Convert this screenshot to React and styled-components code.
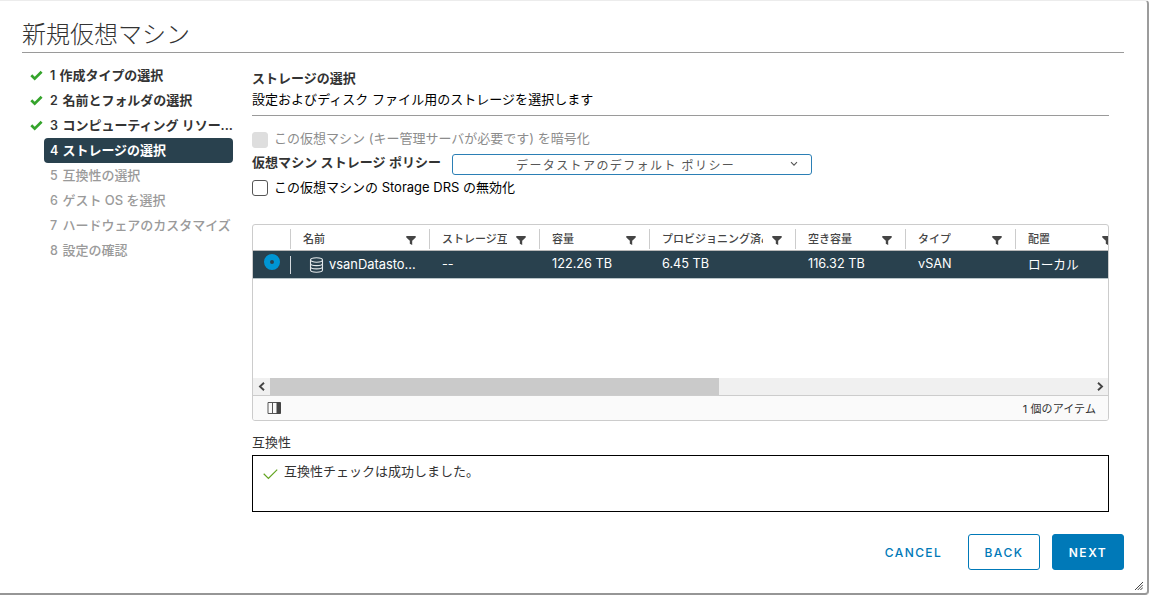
import React from 'react';
import styled, { createGlobalStyle } from 'styled-components';

const GlobalStyle = createGlobalStyle`
    * {
        box-sizing: border-box;
    }

    body {
        margin: 0;
        background: #fff;
        color: #333;
        font-family: Inter, "Noto Sans CJK JP", sans-serif;
        font-size: 13px;
        overflow: hidden;
    }
`

const Dialog = styled.div`
    position: relative;
    display: flex;
    flex-direction: column;
    width: 1149px;
    height: 595px;
    padding: 0 23px 0 22px;
    background: #fff;
    border-top: 1px solid #ececec;
    border-right: 2px solid #9c9c9c;
    border-bottom: 2px solid #969696;
    border-radius: 0 4px 4px 0;
`

const Title = styled.h1`
    height: 52px;
    margin: 0;
    padding-top: 17px;
    border-bottom: 1px solid #9a9a9a;
    color: #333;
    font-size: 24px;
    line-height: 34px;
    font-weight: 200;
`

const Body = styled.div`
    display: flex;
    height: 460px;
`

const Steps = styled.ol`
    flex: none;
    width: 230px;
    margin: 0;
    padding: 10px 0 0;
    list-style: none;
`

const Step = styled.li`
    display: flex;
    align-items: center;
    width: 211px;
    height: 25px;
    color: ${props => props.$state === 'todo' ? '#9a9a9a' : '#333'};
    font-weight: ${props => props.$state === 'todo' ? 500 : 600};
    white-space: nowrap;
`

const StepMark = styled.span`
    flex: none;
    display: flex;
    width: 22px;
    padding-left: 8px;
`

const StepLabel = styled.span`
    flex: none;
    width: 189px;
    height: 25px;
    padding-left: 6px;
    border-radius: 4px;
    line-height: 25px;
    letter-spacing: -.03px;
    color: ${props => props.$active ? '#fff' : 'inherit'};
    background: ${props => props.$active ? '#29414e' : 'transparent'};
`

const StepNumber = styled.span`
    display: inline-block;
    width: ${props => props.$narrow ? 9.5 : 12.5}px;
    font-size: 12.5px;
`

const Content = styled.main`
    width: 857px;
    padding-top: 14px;
`

const PageHeader = styled.header`
    height: 49px;
    padding-top: 1px;
    border-bottom: 1px solid #9a9a9a;
`

const PageTitle = styled.h2`
    margin: 0;
    font-size: 13px;
    line-height: 21px;
    font-weight: 600;
`

const PageText = styled.p`
    margin: 0;
    color: #000;
    line-height: 21px;
    letter-spacing: .03px;
`

const Options = styled.div`
    height: 108px;
    padding-top: 12px;
`

const Field = styled.label`
    display: flex;
    align-items: center;
    height: 24px;
    color: ${props => props.$disabled ? '#8c8c8c' : '#000'};
    white-space: pre;
`

const FieldText = styled.span`
    height: 24px;
    line-height: ${props => props.$disabled ? 21 : 22}px;
`

const Checkbox = styled.span`
    width: 16px;
    height: 16px;
    margin-right: 6px;
    border: 1px solid ${props => props.$disabled ? '#dedede' : '#565656'};
    border-radius: 3px;
    background: ${props => props.$disabled ? '#dedede' : '#fff'};
`

const FieldName = styled.span`
    width: 200px;
    height: 24px;
    color: #333;
    font-weight: 600;
    line-height: 20px;
    letter-spacing: .05px;
`

const Select = styled.div`
    display: flex;
    align-items: center;
    width: 360px;
    height: 21px;
    padding: 0 13px 0 63px;
    border: 1px solid #2b7fb5;
    border-radius: 3px;
    color: #565656;
    font-size: 12px;
    letter-spacing: 1.4px;
    justify-content: space-between;
`

const Grid = styled.section`
    width: 857px;
    height: 197px;
    border: 1px solid #ccc;
    border-radius: 3px;
    overflow: hidden;
`

const columns = '38px 139px 110px 110px 146px 110px 110px 110px';

const GridHead = styled.div`
    display: grid;
    grid-template-columns: ${columns};
    height: 26px;
    padding-top: 4px;
    border-bottom: 1px solid #b8b8b8;
`

const HeadCell = styled.div`
    display: flex;
    align-items: center;
    justify-content: space-between;
    height: 20px;
    padding: 0 13px 3px 12px;
    border-right: 1px solid #ccc;
    color: #454545;
    font-size: 11px;
    font-weight: 500;
    white-space: nowrap;

    span {
        margin-right: 9px;
        overflow: hidden;
    }

    svg {
        flex: none;
        margin-top: 5px;
    }
`

const GridRow = styled.div`
    display: grid;
    grid-template-columns: ${columns};
    align-items: center;
    height: 28px;
    border-bottom: 1px solid #b8c4c8;
    background: #29414e;
    color: #fff;
    font-size: 12.7px;
`

const Cell = styled.div`
    display: flex;
    align-items: center;
    padding: 0 0 2px 12px;
    white-space: nowrap;
`

const RadioCell = styled.div`
    display: flex;
    align-items: center;
    height: 18px;
    padding-left: 11px;
    border-right: 1px solid #d5dade;
`

const Radio = styled.span`
    width: 16px;
    height: 16px;
    margin-top: -5px;
    border: 6px solid #0095d3;
    border-radius: 50%;
    background: #29414e;
`

const DatastoreName = styled(Cell)`
    gap: 5px;
    padding: 0 0 0 18px;
    font-size: 12.9px;
`

const Empty = styled.div`
    height: 99px;
`

const Scrollbar = styled.div`
    display: flex;
    align-items: center;
    justify-content: space-between;
    height: 18px;
    padding: 0 4px 0 5px;
    background: #f0f0f0;
    border-bottom: 1px solid #ccc;
`

const Thumb = styled.div`
    width: 449px;
    height: 17px;
    margin: 0 auto 0 5px;
    background: #cacaca;
`

const GridFooter = styled.div`
    display: flex;
    align-items: center;
    justify-content: space-between;
    height: 24px;
    padding: 0 12px 1px 14px;
    background: #fafafa;
    font-size: 11px;
    letter-spacing: .1px;
    white-space: pre;
`

const CompatibilityTitle = styled.div`
    height: 34px;
    padding-top: 11px;
    line-height: 21px;
`

const Compatibility = styled.div`
    display: flex;
    gap: 6px;
    height: 57px;
    padding: 5px 10px;
    border: 1px solid #000;
    line-height: 21px;

    svg {
        margin-top: 7px;
    }
`

const Actions = styled.footer`
    display: flex;
    justify-content: flex-end;
    gap: 12px;
    padding-top: 21px;
`

const Button = styled.button`
    width: ${props => props.$plain ? 85 : 72}px;
    height: 36px;
    padding: 0;
    border: 1px solid ${props => props.$plain ? 'transparent' : '#0079b8'};
    border-radius: 3px;
    background: ${props => props.$primary ? '#0079b8' : 'transparent'};
    color: ${props => props.$primary ? '#fff' : '#0079b8'};
    font-family: Inter, sans-serif;
    font-size: 12px;
    font-weight: ${props => props.$primary ? 600 : 500};
    letter-spacing: ${props => props.$plain ? 1.4 : 1.55}px;
`

const Grip = styled.svg`
    position: absolute;
    right: 4px;
    bottom: 3px;
`

const steps = [
    { name: '作成タイプの選択', state: 'done' },
    { name: '名前とフォルダの選択', state: 'done' },
    { name: 'コンピューティング リソー...', state: 'done' },
    { name: 'ストレージの選択', state: 'active' },
    { name: '互換性の選択', state: 'todo' },
    { name: 'ゲスト OS を選択', state: 'todo' },
    { name: 'ハードウェアのカスタマイズ', state: 'todo' },
    { name: '設定の確認', state: 'todo' }
];

const headings = ['名前', 'ストレージ互', '容量', 'プロビジョニング済み', '空き容量', 'タイプ', '配置'];
const values = ['--', '122.26 TB', '6.45 TB', '116.32 TB', 'vSAN', 'ローカル'];

const DoneIcon = () => (
    <svg width="13" height="11" viewBox="0 0 13 11">
        <path d="M1.3 5.2 4.7 8.6 11.6 1.7" fill="none" stroke="#35a42c" strokeWidth="2.7" />
    </svg>
);

const FilterIcon = () => (
    <svg width="10" height="9" viewBox="0 0 10 9">
        <path d="M0.3 0h9.4v1.4L6.2 4.8V9L3.8 7.8V4.8L0.3 1.4z" fill="#454545" />
    </svg>
);

const DatastoreIcon = () => (
    <svg width="15" height="16" viewBox="0 0 15 16" fill="none" stroke="#e4e9eb" strokeWidth="1.1">
        <ellipse cx="7.5" cy="3" rx="6" ry="2.2" />
        <path d="M1.5 3v10c0 1.2 2.7 2.2 6 2.2s6-1 6-2.2V3" />
        <path d="M1.5 6.4c0 1.2 2.7 2.2 6 2.2s6-1 6-2.2M1.5 9.7c0 1.2 2.7 2.2 6 2.2s6-1 6-2.2" />
    </svg>
);

const ColumnsIcon = () => (
    <svg width="14" height="12" viewBox="0 0 14 12">
        <path d="M1 .5h12v11H1zM5.5.5v11" fill="none" stroke="#565656" />
        <path d="M9.5 0H13a1 1 0 0 1 1 1v10a1 1 0 0 1-1 1H9.5z" fill="#454545" />
    </svg>
);

const Arrow = ({ d }) => (
    <svg width="7" height="9" viewBox="0 0 7 9">
        <path d={d} fill="none" stroke="#454545" strokeWidth="1.9" />
    </svg>
);

const App = () => (
    <>
        <GlobalStyle />
        <Dialog>
            <Title>新規仮想マシン</Title>
            <Body>
                <Steps>
                    {steps.map((step, i) => (
                        <Step key={step.name} $state={step.state}>
                            <StepMark>{step.state === 'done' ? <DoneIcon /> : null}</StepMark>
                            <StepLabel $active={step.state === 'active'}>
                                <StepNumber $narrow={i === 0}>{i + 1}</StepNumber>
                                {step.name}
                            </StepLabel>
                        </Step>
                    ))}
                </Steps>
                <Content>
                    <PageHeader>
                        <PageTitle>ストレージの選択</PageTitle>
                        <PageText>設定およびディスク ファイル用のストレージを選択します</PageText>
                    </PageHeader>
                    <Options>
                        <Field $disabled>
                            <Checkbox $disabled />
                            <FieldText $disabled>この仮想マシン (キー管理サーバが必要です) を暗号化</FieldText>
                        </Field>
                        <Field as="div">
                            <FieldName>仮想マシン ストレージ ポリシー</FieldName>
                            <Select>
                                データストアのデフォルト ポリシー
                                <svg width="8" height="6" viewBox="0 0 8 6">
                                    <path d="M1 1.2 4 4.2 7 1.2" fill="none" stroke="#565656" strokeWidth="1.1" />
                                </svg>
                            </Select>
                        </Field>
                        <Field>
                            <Checkbox />
                            <FieldText>この仮想マシンの Storage DRS の無効化</FieldText>
                        </Field>
                    </Options>
                    <Grid>
                        <GridHead>
                            <HeadCell />
                            {headings.map(heading => (
                                <HeadCell key={heading}>
                                    <span>{heading}</span>
                                    <FilterIcon />
                                </HeadCell>
                            ))}
                        </GridHead>
                        <GridRow>
                            <RadioCell><Radio /></RadioCell>
                            <DatastoreName><DatastoreIcon />vsanDatasto...</DatastoreName>
                            {values.map(value => <Cell key={value}>{value}</Cell>)}
                        </GridRow>
                        <Empty />
                        <Scrollbar>
                            <Arrow d="M6 .8 2 4.5 6 8.2" />
                            <Thumb />
                            <Arrow d="M1 .8 5 4.5 1 8.2" />
                        </Scrollbar>
                        <GridFooter>
                            <ColumnsIcon />
                            <span>1 個のアイテム</span>
                        </GridFooter>
                    </Grid>
                    <CompatibilityTitle>互換性</CompatibilityTitle>
                    <Compatibility>
                        <svg width="15" height="12" viewBox="0 0 15 12">
                            <path d="M.7 5.8 5.4 10.4 14.2 1.6" fill="none" stroke="#62a420" strokeWidth="1.2" />
                        </svg>
                        互換性チェックは成功しました。
                    </Compatibility>
                </Content>
            </Body>
            <Actions>
                <Button $plain>CANCEL</Button>
                <Button>BACK</Button>
                <Button $primary>NEXT</Button>
            </Actions>
            <Grip width="8" height="8" viewBox="0 0 8 8">
                <path d="M0 8 8 0M2.7 8 8 2.7M5.4 8 8 5.4" stroke="#444" strokeWidth="1" />
            </Grip>
        </Dialog>
    </>
);

export default App;
